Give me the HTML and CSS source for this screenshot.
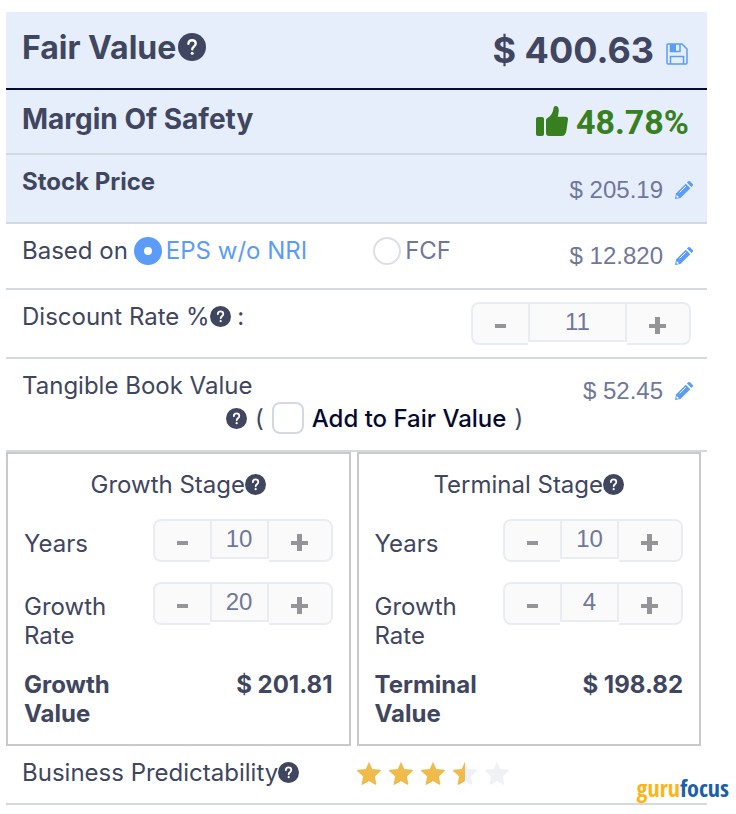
FILE: index.html
```html
<!DOCTYPE html>
<html lang="en">
  <head>
    <title>Fair Value Calculator</title>
    <meta charset="UTF-8" />
    <meta name="viewport" content="width=device-width, initial-scale=1" />
    <link rel="stylesheet" href="styles.css">
  </head>
  <body>
    <svg class="sprite" aria-hidden="true">
      <symbol id="help" viewBox="0 0 24 24">
        <circle cx="12" cy="12" r="12" fill="#40465f" />
        <path d="M8.900 9.300C9 7.200 10.300 6.200 12 6.200c1.900 0 3.200 1.100 3.200 2.900 0 2.500-3 2.600-3 4.900" fill="none" stroke="#fff" stroke-width="2" stroke-linecap="round" />
        <circle cx="12.200" cy="17.300" r="1.300" fill="#fff" />
      </symbol>
      <symbol id="pencil" viewBox="0 0 18 18">
        <path d="M0 18l1-5.500L10.800 2.700l4.500 4.500L5.500 17z" fill="#5a9cf8" />
        <path d="M11.900 1.600L13 .5c.7-.7 1.600-.7 2.300 0l2.200 2.200c.7.700.7 1.600 0 2.300l-1.100 1.100z" fill="#5a9cf8" />
        <path d="M4.600 11.400l6.200-6.200" stroke="#fff" stroke-width="1" />
        <path d="M1.800 13.900l2.300 2.300-2 .5-.8-.8z" fill="#fff" />
      </symbol>
      <symbol id="star" viewBox="0 0 24 24">
        <path d="M12 .8l3.300 7.100 7.900.9c.8.100 1 .8.500 1.300l-5.800 5.300 1.500 7.500c.1.800-.5 1.200-1.200.8L12 20l-6.200 3.700c-.7.400-1.300 0-1.200-.8l1.500-7.500L.3 10.100c-.5-.5-.3-1.200.5-1.300l7.900-.9z" />
      </symbol>
      <clipPath id="left-half"><rect width="12" height="24" /></clipPath>
    </svg>

    <main class="calculator">
      <section class="row shaded fair-value">
        <h1>Fair Value<svg class="help"><use href="#help" /></svg></h1>
        <div class="amount">
          <strong>$ 400.63</strong>
          <button class="icon-button" type="button" aria-label="Save">
            <svg class="save" viewBox="0 0 22 22" fill="none" stroke="#5a9cf8" stroke-width="1.500">
              <path d="M1 2q0-1 1-1h14l5 5v14q0 1-1 1H2q-1 0-1-1z" />
              <path d="M4.500 1v7.500h9.500V1M4.500 21v-7.500h13V21" />
              <path d="M5 1h5v7H5z" fill="#5a9cf8" stroke="none" />
            </svg>
          </button>
        </div>
      </section>

      <section class="row shaded safety">
        <h2>Margin Of Safety</h2>
        <div class="margin">
          <svg class="thumb" viewBox="0 0 32 30" fill="#38801f">
            <rect x="0" y="11" width="8" height="19" rx="2" />
            <path d="M10 14.500c0-1.200.5-2 1.500-2.600 3.500-2.200 5.500-5.200 6-9.700C17.700.8 18.500 0 19.700 0c2.600 0 3.400 2.800 3 5.600-.2 1.900-.5 3.400-1 5.100h8c1.600 0 2.400 1.100 2.300 2.600L30.500 24c-.6 4-2 6-5 6H13q-3 0-3-3z" />
          </svg>
          <strong>48.78%</strong>
        </div>
      </section>

      <section class="row shaded stock">
        <h3>Stock Price</h3>
        <div class="price">
          $ 205.19
          <button class="icon-button" type="button" aria-label="Edit stock price"><svg class="pencil"><use href="#pencil" /></svg></button>
        </div>
      </section>

      <section class="row based">
        <div class="basis">
          <span>Based on</span>
          <label class="basis-eps"><input type="radio" name="basis" checked />EPS w/o NRI</label>
          <label><input type="radio" name="basis" />FCF</label>
        </div>
        <div class="price">
          $ 12.820
          <button class="icon-button" type="button" aria-label="Edit earnings"><svg class="pencil"><use href="#pencil" /></svg></button>
        </div>
      </section>

      <section class="row discount">
        <label for="discount">Discount Rate %<svg class="help"><use href="#help" /></svg> :</label>
        <div class="stepper wide">
          <button type="button" class="minus" aria-label="Decrease"></button>
          <input id="discount" type="text" value="11" />
          <button type="button" class="plus" aria-label="Increase"></button>
        </div>
      </section>

      <section class="row book">
        <div class="book-label">
          <div>Tangible Book Value</div>
          <div class="book-option">
            <svg class="help"><use href="#help" /></svg>
            <span>(</span>
            <label><input type="checkbox" />Add to Fair Value</label>
            <span>)</span>
          </div>
        </div>
        <div class="price">
          $ 52.45
          <button class="icon-button" type="button" aria-label="Edit book value"><svg class="pencil"><use href="#pencil" /></svg></button>
        </div>
      </section>

      <div class="stages">
        <section class="stage">
          <div class="stage-title">Growth Stage<svg class="help"><use href="#help" /></svg></div>
          <div class="stage-row">
            <label for="growth-years">Years</label>
            <div class="stepper">
              <button type="button" class="minus" aria-label="Decrease"></button>
              <input id="growth-years" type="text" value="10" />
              <button type="button" class="plus" aria-label="Increase"></button>
            </div>
          </div>
          <div class="stage-row">
            <label for="growth-rate">Growth Rate</label>
            <div class="stepper">
              <button type="button" class="minus" aria-label="Decrease"></button>
              <input id="growth-rate" type="text" value="20" />
              <button type="button" class="plus" aria-label="Increase"></button>
            </div>
          </div>
          <div class="stage-total">
            <span>Growth Value</span>
            <span>$ 201.81</span>
          </div>
        </section>

        <section class="stage">
          <div class="stage-title">Terminal Stage<svg class="help"><use href="#help" /></svg></div>
          <div class="stage-row">
            <label for="terminal-years">Years</label>
            <div class="stepper">
              <button type="button" class="minus" aria-label="Decrease"></button>
              <input id="terminal-years" type="text" value="10" />
              <button type="button" class="plus" aria-label="Increase"></button>
            </div>
          </div>
          <div class="stage-row">
            <label for="terminal-rate">Growth Rate</label>
            <div class="stepper">
              <button type="button" class="minus" aria-label="Decrease"></button>
              <input id="terminal-rate" type="text" value="4" />
              <button type="button" class="plus" aria-label="Increase"></button>
            </div>
          </div>
          <div class="stage-total">
            <span>Terminal Value</span>
            <span>$ 198.82</span>
          </div>
        </section>
      </div>

      <section class="predictability">
        <div>Business Predictability<svg class="help"><use href="#help" /></svg></div>
        <div class="stars" role="img" aria-label="3.5 out of 5 stars">
          <svg><use href="#star" /></svg>
          <svg><use href="#star" /></svg>
          <svg><use href="#star" /></svg>
          <svg><use class="empty" href="#star" /><g clip-path="url(#left-half)"><use href="#star" /></g></svg>
          <svg class="empty"><use href="#star" /></svg>
        </div>
      </section>
      <div class="brand"><span>guru</span>focus</div>
    </main>
  </body>
</html>
```

FILE: styles.css
```css
* {
  box-sizing: border-box;
}
body {
  margin: 0;
  background: #fff;
  color: #40465f;
  font-family: Inter, "Liberation Sans", sans-serif;
  font-size: 24px;
  line-height: 29px;
}
h1,
h2,
h3 {
  margin: 0;
  font-weight: 700;
}
button,
input {
  margin: 0;
  padding: 0;
  font: inherit;
}
.sprite {
  position: absolute;
  width: 0;
  height: 0;
}
.calculator {
  position: relative;
  margin: 12px 29px 0 6px;
}
.row {
  display: flex;
  justify-content: space-between;
  padding: 0 16px;
  border-bottom: 2px solid #d4d9e0;
}
.shaded {
  background: #e6eefc;
}
.help {
  width: 21px;
  height: 21px;
  vertical-align: -2px;
}
.icon-button {
  border: none;
  background: none;
  line-height: 0;
  cursor: pointer;
}

/* summary rows */
.fair-value {
  height: 78px;
  border-bottom-color: #050a30;
}
.fair-value h1 {
  padding-top: 16px;
  font-size: 32px;
  line-height: 40px;
}
.fair-value .help {
  width: 28px;
  height: 28px;
  margin-left: 2px;
}
.amount {
  display: flex;
  align-items: flex-start;
  gap: 12px;
  padding: 16px 3px 0 0;
  font-size: 36px;
  line-height: 44px;
}
.save {
  width: 22px;
  height: 22px;
  margin-top: 15px;
}
.safety {
  height: 65px;
}
.safety h2 {
  padding-top: 12px;
  font-size: 28px;
  line-height: 34px;
}
.margin {
  display: flex;
  gap: 8px;
  padding: 12px 2px 0 0;
  color: #38801f;
  font-family: Roboto, "Liberation Sans", sans-serif;
  font-size: 34px;
  line-height: 40px;
}
.thumb {
  width: 32px;
  height: 30px;
  margin-top: 4px;
}
.stock {
  height: 69px;
}
.stock h3 {
  padding-top: 12px;
  font-size: 24px;
}
.price {
  display: flex;
  align-items: center;
  gap: 12px;
  height: 29px;
  margin-top: 20px;
  color: #70789a;
  font-family: "Liberation Sans", Arial, sans-serif;
}
.stock,
.based,
.book {
  padding-right: 14px;
}
.pencil {
  width: 18px;
  height: 18px;
}

/* inputs */
.based {
  height: 66px;
}
.based .price {
  margin-top: 17px;
}
.basis {
  display: flex;
  align-items: center;
  height: 53px;
}
.basis label {
  display: flex;
  align-items: center;
  color: #70789a;
}
.basis .basis-eps {
  margin: 0 66px 0 6px;
  color: #5a9cf8;
}
.basis input {
  appearance: none;
  width: 28px;
  height: 28px;
  margin-right: 4px;
  border: 2px solid #dcdfe6;
  border-radius: 50%;
}
.basis input:checked {
  border: 10px solid #5a9cf8;
}
.discount {
  height: 69px;
  padding-top: 12px;
}
.stepper {
  display: flex;
  width: 180px;
  height: 43px;
  border-radius: 8px;
}
.stepper.wide {
  width: 220px;
}
.stepper button {
  position: relative;
  width: 57px;
  border: 2px solid #e9edf2;
  border-right: none;
  border-radius: 8px 0 0 8px;
  background: #fafafa;
}
.stepper .plus {
  width: 64px;
  border-right: 2px solid #e9edf2;
  border-left: none;
  border-radius: 0 8px 8px 0;
}
.stepper button::before,
.stepper .plus::after {
  content: "";
  position: absolute;
  top: 20px;
  width: 11px;
  height: 4px;
  background: #949499;
}
.stepper .minus::before {
  left: 22px;
}
.stepper .plus::before {
  left: 22px;
  width: 17px;
}
.stepper .plus::after {
  top: 13px;
  left: 28px;
  width: 5px;
  height: 17px;
}
.stepper input {
  flex: 1;
  min-width: 0;
  height: 40px;
  border: 2px solid #e9edf2;
  border-radius: 0;
  background: #fafafa;
  color: #70789a;
  font-family: "Liberation Sans", Arial, sans-serif;
  text-align: center;
}
.book {
  height: 93px;
  padding-top: 12px;
}
.book-option {
  display: flex;
  align-items: center;
  gap: 8px;
  height: 36px;
  padding-left: 204px;
}
.book-option label {
  display: flex;
  align-items: center;
  gap: 8px;
  color: #050a30;
  font-weight: 500;
}
.book-option input {
  appearance: none;
  width: 32px;
  height: 32px;
  border: 2px solid #d4d9e0;
  border-radius: 8px;
}
.book .price {
  margin-top: 5px;
}

/* stages */
.stages {
  display: grid;
  grid-template-columns: 1fr 1fr;
  gap: 6px;
  margin-right: 6px;
}
.stage {
  height: 294px;
  padding: 16px 16px 0;
  border: 2px solid #c9c9c9;
}
.stage-title {
  text-align: center;
}
.stage-row {
  display: flex;
  justify-content: space-between;
  height: 63px;
  padding-top: 20px;
}
.stage-row label {
  width: 100px;
  padding-top: 10px;
}
.stage-total {
  display: flex;
  justify-content: space-between;
  padding-top: 45px;
  font-weight: 700;
}
.stage-total span:first-child {
  width: 110px;
}

/* footer */
.predictability {
  display: grid;
  grid-template-columns: 1fr 1fr;
  height: 59px;
  padding: 12px 16px 0;
  border-bottom: 2px solid #d4d9e0;
}
.stars {
  display: flex;
  gap: 8px;
  padding-top: 3px;
}
.stars svg {
  width: 24px;
  height: 24px;
  fill: #efbb4a;
}
.stars .empty {
  fill: #f0f1f7;
}
.brand {
  position: absolute;
  right: -22px;
  bottom: 3px;
  color: #1b5eab;
  font-family: "Liberation Sans Narrow", "Open Sans Condensed", Roboto, sans-serif;
  font-size: 24px;
  font-weight: 700;
}
.brand span {
  color: #fdb515;
}
```
